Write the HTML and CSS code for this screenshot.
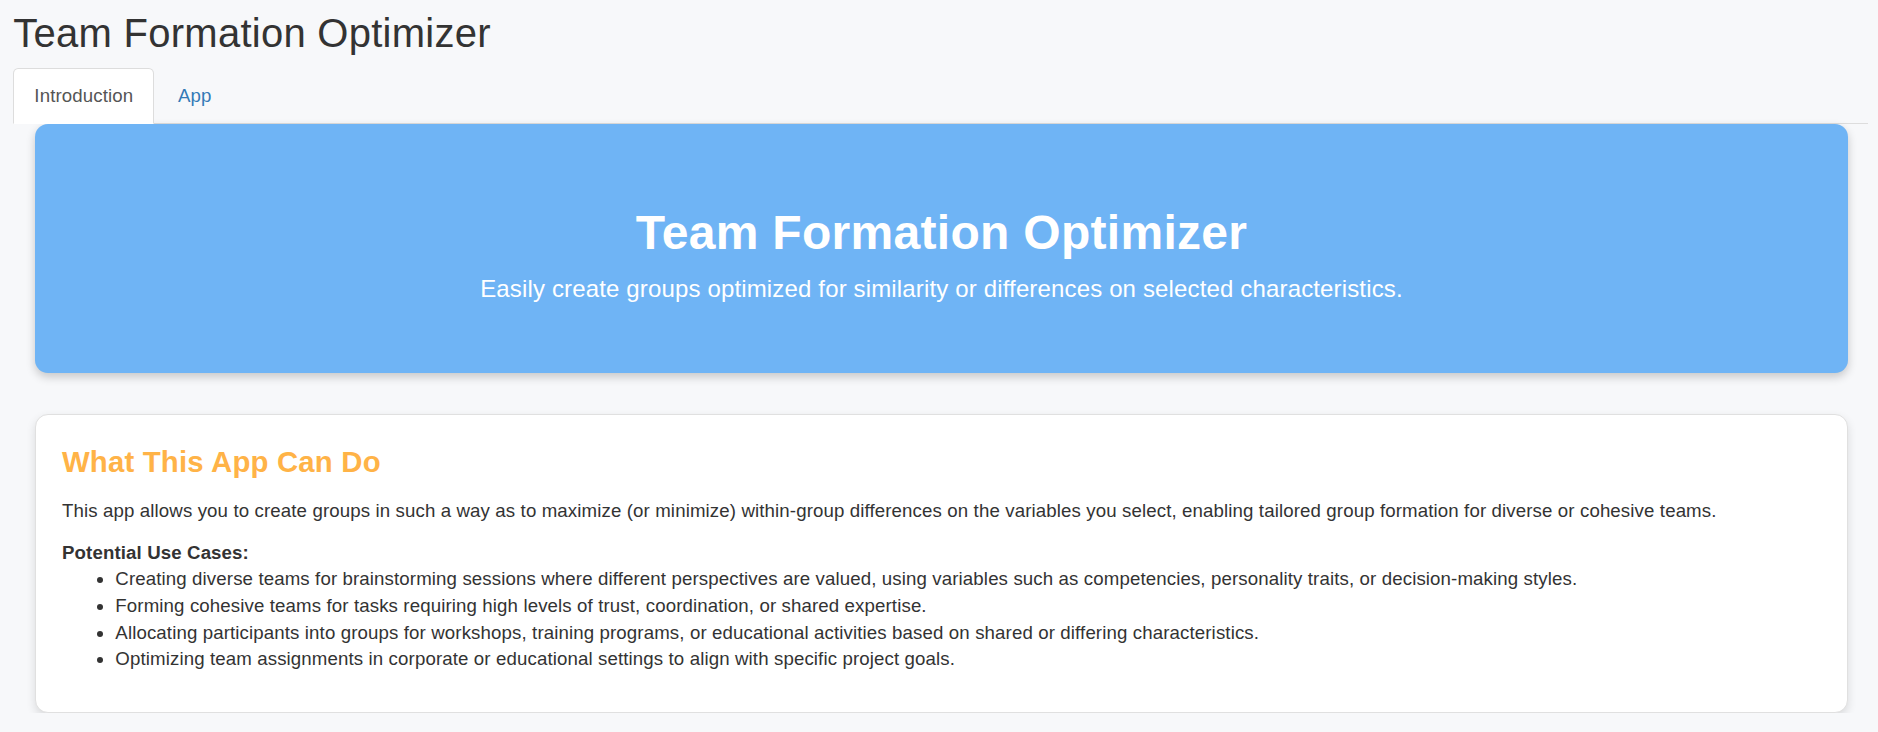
FILE: index.html
```html
<!DOCTYPE html>
<html lang="en">
<head>
<meta charset="utf-8">
<title>Team Formation Optimizer</title>
<link rel="stylesheet" href="styles.css">
</head>
<body>
<div class="container">
  <h2 class="page-title">Team Formation Optimizer</h2>
  <ul class="nav-tabs">
    <li class="tab active"><a href="#">Introduction</a></li>
    <li class="tab"><a href="#">App</a></li>
  </ul>
  <div class="tab-content">
    <div class="hero">
      <h1 class="hero-title">Team Formation Optimizer</h1>
      <p class="hero-sub">Easily create groups optimized for similarity or differences on selected characteristics.</p>
    </div>
    <div class="card">
      <h3 class="card-title">What This App Can Do</h3>
      <p class="card-text">This app allows you to create groups in such a way as to maximize (or minimize) within-group differences on the variables you select, enabling tailored group formation for diverse or cohesive teams.</p>
      <strong class="use-title">Potential Use Cases:</strong>
      <ul class="use-list">
        <li>Creating diverse teams for brainstorming sessions where different perspectives are valued, using variables such as competencies, personality traits, or decision-making styles.</li>
        <li>Forming cohesive teams for tasks requiring high levels of trust, coordination, or shared expertise.</li>
        <li>Allocating participants into groups for workshops, training programs, or educational activities based on shared or differing characteristics.</li>
        <li>Optimizing team assignments in corporate or educational settings to align with specific project goals.</li>
      </ul>
    </div>
  </div>
</div>
</body>
</html>
```

FILE: styles.css
```css
html, body {
  margin: 0;
  padding: 0;
}

body {
  background: #f7f8fa;
  font-family: "Liberation Sans", Arial, Helvetica, sans-serif;
  font-size: 18.67px;
  line-height: 26.67px;
  letter-spacing: 0.12px;
  color: #333333;
}

.container {
  padding: 0 10px 0 13.33px;
}

.page-title {
  font-size: 40px;
  line-height: 44px;
  font-weight: 400;
  letter-spacing: 0.26px;
  margin: 10.8px 0 13.5px;
  color: #333333;
}

.nav-tabs {
  display: flex;
  list-style: none;
  margin: 0;
  padding: 0;
  border-bottom: 1px solid #dddddd;
}

.tab {
  margin-right: 2.67px;
  margin-bottom: -1px;
}

.tab a {
  display: block;
  padding: 13.33px 20px;
  line-height: 26.67px;
  border: 1px solid transparent;
  border-radius: 5.33px 5.33px 0 0;
  color: #337ab7;
  text-decoration: none;
}

.tab.active a {
  color: #555555;
  background: #ffffff;
  border-color: #dddddd;
  border-bottom-color: transparent;
}

.tab-content {
  padding: 0 20px 0 21.67px;
}

.hero {
  background: #6fb4f5;
  border-radius: 13px;
  box-shadow: 0 4px 10px rgba(0, 0, 0, 0.2);
  text-align: center;
  color: #ffffff;
  padding: 83px 20px 66.7px;
}

.hero-title {
  font-size: 48px;
  line-height: 52.8px;
  font-weight: 700;
  letter-spacing: 0.3px;
  margin: 0 0 12.2px;
}

.hero-sub {
  font-size: 24px;
  line-height: 34.3px;
  letter-spacing: 0.15px;
  margin: 0;
}

.card {
  margin-top: 41.4px;
  background: #ffffff;
  border: 1px solid #e0e0e0;
  border-radius: 13px;
  box-shadow: 0 4px 10px rgba(0, 0, 0, 0.12);
  padding: 26px;
}

.card-title {
  font-size: 29.33px;
  line-height: 32.27px;
  font-weight: 700;
  letter-spacing: 0.19px;
  color: #ffb347;
  margin: 5.5px 0 19.2px;
}

.card-text {
  margin: 0 0 15px;
}

.use-title {
  display: block;
  font-weight: 700;
}

.use-list {
  margin: 0 0 13.33px;
  padding-left: 53.33px;
}
```
